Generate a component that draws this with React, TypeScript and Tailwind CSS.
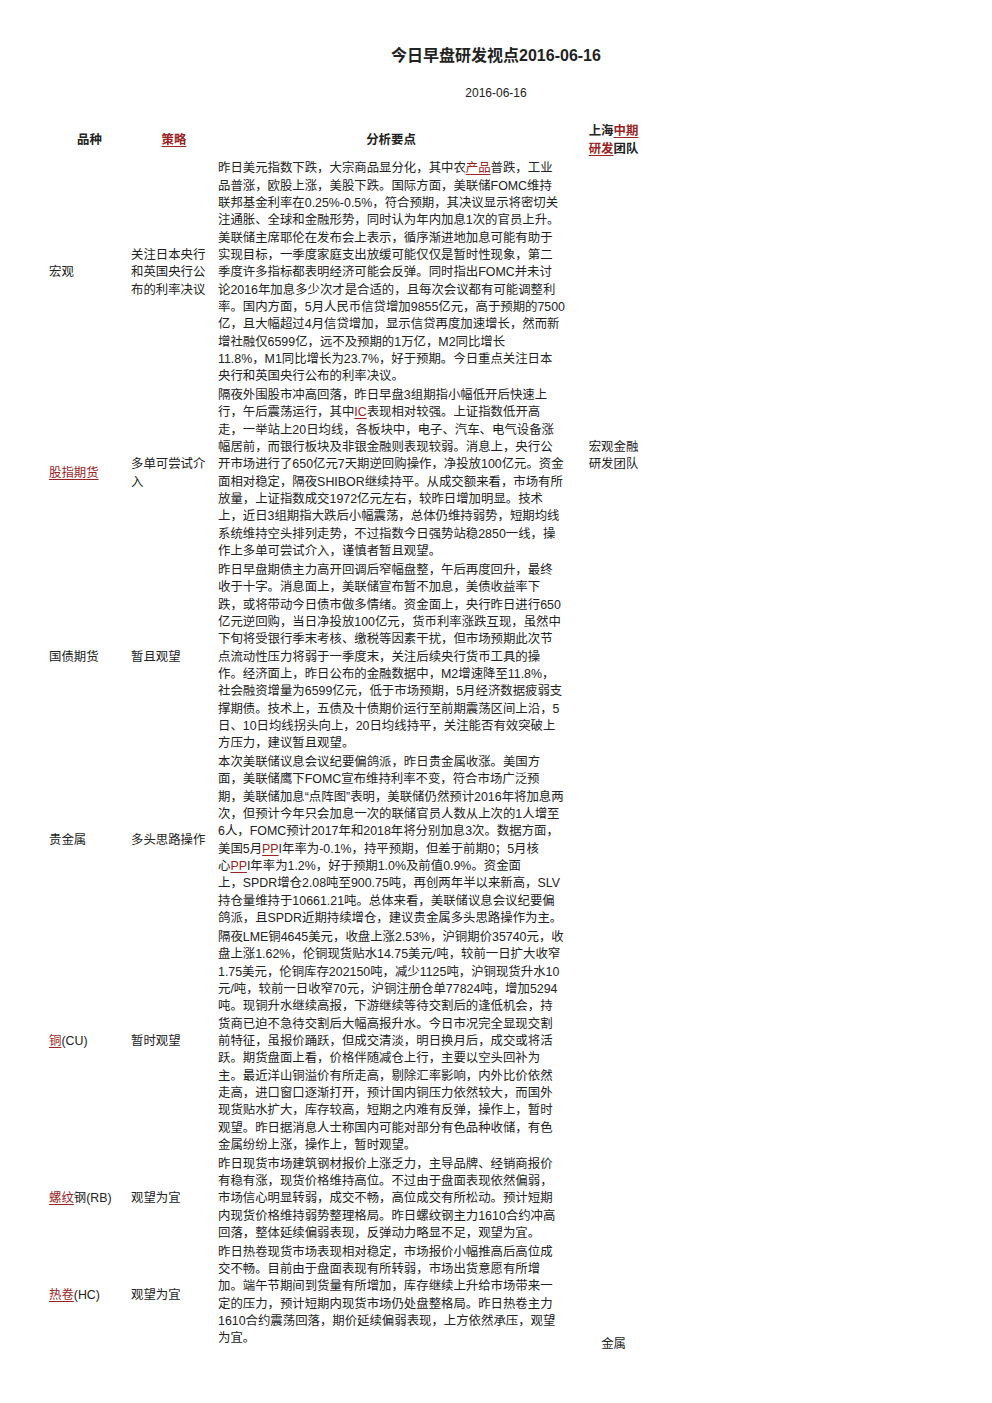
import React from "react";

const FONT = { fontFamily: '"Liberation Sans", "Noto Sans CJK SC", sans-serif' };

function Rich({ s }: { s: string }) {
  const parts = s.split(/(\[[^\]]+\])/);
  return (
    <>
      {parts.map((p, i) =>
        p.startsWith("[") ? (
          <span key={i} className="text-[#9a2424] underline underline-offset-2">
            {p.slice(1, -1)}
          </span>
        ) : (
          <React.Fragment key={i}>{p}</React.Fragment>
        )
      )}
    </>
  );
}

function Lines({ lines }: { lines: string[] }) {
  return (
    <>
      {lines.map((l, i) => (
        <div key={i} className="whitespace-nowrap">
          <Rich s={l} />
        </div>
      ))}
    </>
  );
}

type Row = { name: string; strat: string[]; text: string[] };

const rows: Row[] = [
  {
    name: "宏观",
    strat: ["关注日本央行", "和英国央行公", "布的利率决议"],
    text: [
      "昨日美元指数下跌，大宗商品显分化，其中农[产品]普跌，工业",
      "品普涨，欧股上涨，美股下跌。国际方面，美联储FOMC维持",
      "联邦基金利率在0.25%-0.5%，符合预期，其决议显示将密切关",
      "注通胀、全球和金融形势，同时认为年内加息1次的官员上升。",
      "美联储主席耶伦在发布会上表示，循序渐进地加息可能有助于",
      "实现目标，一季度家庭支出放缓可能仅仅是暂时性现象，第二",
      "季度许多指标都表明经济可能会反弹。同时指出FOMC并未讨",
      "论2016年加息多少次才是合适的，且每次会议都有可能调整利",
      "率。国内方面，5月人民币信贷增加9855亿元，高于预期的7500",
      "亿，且大幅超过4月信贷增加，显示信贷再度加速增长，然而新",
      "增社融仅6599亿，远不及预期的1万亿，M2同比增长",
      "11.8%，M1同比增长为23.7%，好于预期。今日重点关注日本",
      "央行和英国央行公布的利率决议。",
    ],
  },
  {
    name: "[股指期货]",
    strat: ["多单可尝试介", "入"],
    text: [
      "隔夜外围股市冲高回落，昨日早盘3组期指小幅低开后快速上",
      "行，午后震荡运行，其中[IC]表现相对较强。上证指数低开高",
      "走，一举站上20日均线，各板块中，电子、汽车、电气设备涨",
      "幅居前，而银行板块及非银金融则表现较弱。消息上，央行公",
      "开市场进行了650亿元7天期逆回购操作，净投放100亿元。资金",
      "面相对稳定，隔夜SHIBOR继续持平。从成交额来看，市场有所",
      "放量，上证指数成交1972亿元左右，较昨日增加明显。技术",
      "上，近日3组期指大跌后小幅震荡，总体仍维持弱势，短期均线",
      "系统维持空头排列走势，不过指数今日强势站稳2850一线，操",
      "作上多单可尝试介入，谨慎者暂且观望。",
    ],
  },
  {
    name: "国债期货",
    strat: ["暂且观望"],
    text: [
      "昨日早盘期债主力高开回调后窄幅盘整，午后再度回升，最终",
      "收于十字。消息面上，美联储宣布暂不加息，美债收益率下",
      "跌，或将带动今日债市做多情绪。资金面上，央行昨日进行650",
      "亿元逆回购，当日净投放100亿元，货币利率涨跌互现，虽然中",
      "下旬将受银行季末考核、缴税等因素干扰，但市场预期此次节",
      "点流动性压力将弱于一季度末，关注后续央行货币工具的操",
      "作。经济面上，昨日公布的金融数据中，M2增速降至11.8%，",
      "社会融资增量为6599亿元，低于市场预期，5月经济数据疲弱支",
      "撑期债。技术上，五债及十债期价运行至前期震荡区间上沿，5",
      "日、10日均线拐头向上，20日均线持平，关注能否有效突破上",
      "方压力，建议暂且观望。",
    ],
  },
  {
    name: "贵金属",
    strat: ["多头思路操作"],
    text: [
      "本次美联储议息会议纪要偏鸽派，昨日贵金属收涨。美国方",
      "面，美联储鹰下FOMC宣布维持利率不变，符合市场广泛预",
      "期，美联储加息“点阵图”表明，美联储仍然预计2016年将加息两",
      "次，但预计今年只会加息一次的联储官员人数从上次的1人增至",
      "6人，FOMC预计2017年和2018年将分别加息3次。数据方面，",
      "美国5月[PP]I年率为-0.1%，持平预期，但差于前期0；5月核",
      "心[PP]I年率为1.2%，好于预期1.0%及前值0.9%。资金面",
      "上，SPDR增仓2.08吨至900.75吨，再创两年半以来新高，SLV",
      "持仓量维持于10661.21吨。总体来看，美联储议息会议纪要偏",
      "鸽派，且SPDR近期持续增仓，建议贵金属多头思路操作为主。",
    ],
  },
  {
    name: "[铜](CU)",
    strat: ["暂时观望"],
    text: [
      "隔夜LME铜4645美元，收盘上涨2.53%，沪铜期价35740元，收",
      "盘上涨1.62%，伦铜现货贴水14.75美元/吨，较前一日扩大收窄",
      "1.75美元，伦铜库存202150吨，减少1125吨，沪铜现货升水10",
      "元/吨，较前一日收窄70元，沪铜注册仓单77824吨，增加5294",
      "吨。现铜升水继续高报，下游继续等待交割后的逢低机会，持",
      "货商已迫不急待交割后大幅高报升水。今日市况完全显现交割",
      "前特征，虽报价踊跃，但成交清淡，明日换月后，成交或将活",
      "跃。期货盘面上看，价格伴随减仓上行，主要以空头回补为",
      "主。最近洋山铜溢价有所走高，剔除汇率影响，内外比价依然",
      "走高，进口窗口逐渐打开，预计国内铜压力依然较大，而国外",
      "现货贴水扩大，库存较高，短期之内难有反弹，操作上，暂时",
      "观望。昨日据消息人士称国内可能对部分有色品种收储，有色",
      "金属纷纷上涨，操作上，暂时观望。",
    ],
  },
  {
    name: "[螺纹]钢(RB)",
    strat: ["观望为宜"],
    text: [
      "昨日现货市场建筑钢材报价上涨乏力，主导品牌、经销商报价",
      "有稳有涨，现货价格维持高位。不过由于盘面表现依然偏弱，",
      "市场信心明显转弱，成交不畅，高位成交有所松动。预计短期",
      "内现货价格维持弱势整理格局。昨日螺纹钢主力1610合约冲高",
      "回落，整体延续偏弱表现，反弹动力略显不足，观望为宜。",
    ],
  },
  {
    name: "[热卷](HC)",
    strat: ["观望为宜"],
    text: [
      "昨日热卷现货市场表现相对稳定，市场报价小幅推高后高位成",
      "交不畅。目前由于盘面表现有所转弱，市场出货意愿有所增",
      "加。端午节期间到货量有所增加，库存继续上升给市场带来一",
      "定的压力，预计短期内现货市场仍处盘整格局。昨日热卷主力",
      "1610合约震荡回落，期价延续偏弱表现，上方依然承压，观望",
      "为宜。",
    ],
  },
];

export default function App() {
  return (
    <div className="w-[992px] h-[1403px] bg-white text-[#222] overflow-hidden" style={FONT}>
      <div className="pt-[46px] text-center text-[16px] leading-[20px] font-bold">
        今日早盘研发视点2016-06-16
      </div>
      <div className="mt-[18px] text-center text-[12px] leading-[18px]">
        2016-06-16
      </div>
      <table className="mt-[19px] ml-[48px] table-fixed border-collapse text-[12.4px] leading-[17.35px]">
        <colgroup>
          <col className="w-[83px]" />
          <col className="w-[86px]" />
          <col className="w-[348px]" />
          <col className="w-[97px]" />
        </colgroup>
        <thead>
          <tr className="font-bold">
            <th className="p-0 pt-[0.75px] pb-[1.75px] leading-[18px] text-center align-middle font-bold">品种</th>
            <th className="p-0 pt-[0.75px] pb-[1.75px] leading-[18px] text-center align-middle font-bold">
              <Rich s="[策略]" />
            </th>
            <th className="p-0 pt-[0.75px] pb-[1.75px] leading-[18px] text-center align-middle font-bold">分析要点</th>
            <th className="p-0 pt-[0.75px] pb-[1.75px] leading-[18px] text-center align-middle font-bold">
              <div>
                上海<Rich s="[中期]" />
              </div>
              <div>
                <Rich s="[研发]" />团队
              </div>
            </th>
          </tr>
        </thead>
        <tbody>
          {rows.map((r, i) => (
            <tr key={i}>
              <td className="p-0 pl-[1px] py-[0.7px] align-middle whitespace-nowrap">
                <Rich s={r.name} />
              </td>
              <td className="p-0 py-[0.7px] align-middle">
                <Lines lines={r.strat} />
              </td>
              <td className="p-0 pl-[1px] py-[0.7px] align-top">
                <Lines lines={r.text} />
              </td>
              {i === 0 && (
                <td rowSpan={3} className="p-0 align-middle text-center">
                  <div>宏观金融</div>
                  <div>研发团队</div>
                </td>
              )}
              {i === 3 && (
                <td rowSpan={4} className="p-0 align-bottom text-center">
                  <div className="translate-y-[5px]">金属</div>
                </td>
              )}
            </tr>
          ))}
        </tbody>
      </table>
    </div>
  );
}
